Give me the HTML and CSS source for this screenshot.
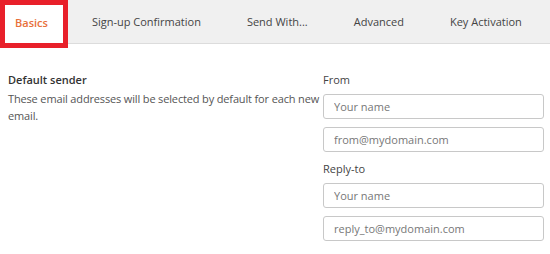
FILE: index.html
```html
<!DOCTYPE html>
<html lang="en">
<head>
  <meta charset="UTF-8" />
  <title>Settings</title>
  <link rel="stylesheet" href="styles.css">
</head>
<body>
  <nav class="tabs">
    <div class="tab active">Basics</div>
    <div class="tab">Sign-up Confirmation</div>
    <div class="tab">Send With...</div>
    <div class="tab">Advanced</div>
    <div class="tab">Key Activation</div>
    <div class="highlight"></div>
  </nav>

  <div class="section">
    <div class="info">
      <h3>Default sender</h3>
      <p>These email addresses will be selected by default for each new email.</p>
    </div>
    <div class="fields">
      <label>From</label>
      <input type="text" placeholder="Your name">
      <input type="text" placeholder="from@mydomain.com">
      <label>Reply-to</label>
      <input type="text" placeholder="Your name">
      <input type="text" placeholder="reply_to@mydomain.com">
    </div>
  </div>
</body>
</html>
```

FILE: styles.css
```css
body {
  margin: 0;
  font-family: 'Open Sans', 'Noto Sans', sans-serif;
  font-size: 11px;
  color: #333;
  background: #fff;
}

.tabs {
  position: relative;
  display: flex;
  height: 43px;
  background-color: #f0f0f0;
  border-bottom: 1px solid #dcdcdc;
}

.tab {
  display: flex;
  align-items: center;
  flex-shrink: 0;
  white-space: nowrap;
  padding: 0 23px;
  color: #444;
}

.tab.active {
  padding: 0 17px 0 10px;
  margin-left: 5px;
  margin-bottom: -1px;
  background-color: #fff;
  color: #e8703a;
  font-weight: 600;
}

.tab.active + .tab {
  padding-left: 27px;
}

/* annotation box over the active tab */
.highlight {
  position: absolute;
  left: 0;
  top: 0;
  width: 58px;
  height: 38px;
  border: 5px solid #e8202a;
}

.section {
  display: flex;
  justify-content: space-between;
  padding: 27px 6px 0 8px;
}

.info {
  width: 314px;
}

.info h3 {
  margin: 0 0 2px;
  font-size: 11px;
  font-weight: 600;
  color: #333;
  line-height: 17px;
}

.info p {
  margin: 0;
  color: #555;
  line-height: 17px;
  letter-spacing: -0.15px;
}

.fields {
  display: flex;
  flex-direction: column;
  width: 221px;
}

.fields label {
  line-height: 17px;
  margin-bottom: 6px;
  color: #444;
}

.fields input {
  box-sizing: border-box;
  height: 25px;
  margin: 0 0 8px;
  padding: 0 10px;
  border: 1px solid #c8c8c8;
  border-radius: 3px;
  font-family: inherit;
  font-size: 11px;
  color: #333;
}

.fields input::placeholder {
  color: #777;
}
```
